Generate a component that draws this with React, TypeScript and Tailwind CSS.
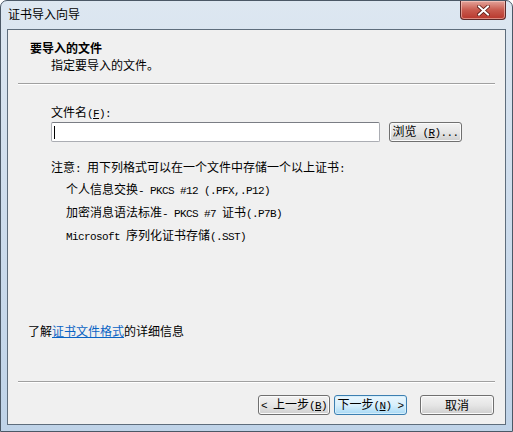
const font = { fontFamily: '"Noto Sans CJK SC", "Liberation Sans", sans-serif' }

// half-width latin text, drawn 6px per char like the dialog's system font
function M({ children }: { children: React.ReactNode }) {
  return (
    <span className="font-['Liberation_Mono',monospace] text-[11px] leading-none tracking-[-0.6px] whitespace-pre">
      {children}
    </span>
  )
}

function Btn({ children, focused = false, w }: { children: React.ReactNode; focused?: boolean; w: string }) {
  return (
    <div
      className={`${w} h-[20px] rounded-[3px] border flex items-center justify-center text-[12px] leading-none text-black ${
        focused
          ? 'border-[#3c7fb1] bg-gradient-to-b from-[#eaf6fd] via-[#d9f0fc] to-[#a7d9f5] shadow-[inset_0_0_0_1px_#d6eefa]'
          : 'border-[#707070] bg-gradient-to-b from-[#f2f2f2] via-[#e6e6e6] to-[#cfcfcf] shadow-[inset_0_0_0_1px_#fbfbfb]'
      }`}
    >
      <span>{children}</span>
    </div>
  )
}

export default function App() {
  return (
    <div
      className="w-[513px] h-[432px] flex flex-col rounded-t-[7px] border border-[#4b5866] bg-gradient-to-b from-[#dde7f1] via-[#cddcec] to-[#bfd3e8] overflow-hidden"
      style={font}
    >
      {/* title bar */}
      <div className="h-[28px] flex items-start justify-between shrink-0">
        <div className="pl-[7px] pt-[5px] text-[12px] leading-[16px] text-black">证书导入向导</div>
        <div className="mr-[6px] w-[46px] h-[19px] rounded-b-[4px] border border-t-0 border-[#5b2a2a] bg-gradient-to-b from-[#e3a39a] via-[#c85a4e] to-[#b8362c] flex items-center justify-center shadow-[inset_0_0_0_1px_rgba(255,220,210,0.5)]">
          <svg width="13" height="11" viewBox="0 0 13 11">
            <path d="M2 1.5 L11 9.5 M11 1.5 L2 9.5" stroke="#5a1a14" strokeWidth="3.6" strokeLinecap="square" />
            <path d="M2 1.5 L11 9.5 M11 1.5 L2 9.5" stroke="#ffffff" strokeWidth="2" strokeLinecap="square" />
          </svg>
        </div>
      </div>

      {/* client frame */}
      <div className="flex-1 px-[6px] pb-[6px]">
        <div className="h-full border border-[#5e6d7c] bg-[#f0f0f0] flex flex-col text-[12px] text-black">
          <div className="pl-[22px] pt-[10px]">
            <div className="h-[16px] leading-[16px] font-bold">要导入的文件</div>
            <div className="h-[16px] leading-[16px] pl-[21px] mt-[1px]">指定要导入的文件。</div>
          </div>
          <div className="mx-[10px] mt-[10px] h-[2px] border-t border-[#a0a0a0] border-b border-b-white" />

          <div className="pl-[43px] mt-[19px]">
            <div className="h-[16px] leading-[16px]">
              文件名<M>(<span className="underline">F</span>):</M>
            </div>
            <div className="mt-[2px] flex items-center gap-[9px]">
              <div className="w-[329px] h-[20px] border border-[#abadb3] border-t-[#7a7d84] bg-white rounded-[2px] flex items-center pl-[2px]">
                <div className="w-px h-[13px] bg-black" />
              </div>
              <Btn w="w-[73px]">
                浏览<M> (<span className="underline">R</span>)...</M>
              </Btn>
            </div>

            <div className="mt-[17px] h-[16px] leading-[16px]">
              注意<M>: </M>用下列格式可以在一个文件中存储一个以上证书<M>:</M>
            </div>
            <div className="pl-[15px] mt-[6px] flex flex-col gap-[7px] leading-[16px]">
              <div className="h-[16px]">
                个人信息交换<M>- PKCS #12 (.PFX,.P12)</M>
              </div>
              <div className="h-[16px]">
                加密消息语法标准<M>- PKCS #7 </M>证书<M>(.P7B)</M>
              </div>
              <div className="h-[16px]">
                <M>Microsoft </M>序列化证书存储<M>(.SST)</M>
              </div>
            </div>
          </div>

          <div className="pl-[20px] mt-[80px] h-[16px] leading-[16px]">
            了解<span className="text-[#0a63c4] underline">证书文件格式</span>的详细信息
          </div>

          <div className="mx-[10px] mt-[42px] h-[2px] border-t border-[#a0a0a0] border-b border-b-white" />

          <div className="mt-[12px] pr-[11px] flex justify-end items-center">
            <Btn w="w-[72px]">
              <M>&lt; </M>上一步<M>(<span className="underline">B</span>)</M>
            </Btn>
            <div className="ml-[4px]">
              <Btn w="w-[73px]" focused>
                下一步<M>(<span className="underline">N</span>) &gt;</M>
              </Btn>
            </div>
            <div className="ml-[13px]">
              <Btn w="w-[74px]">取消</Btn>
            </div>
          </div>
        </div>
      </div>
    </div>
  )
}
